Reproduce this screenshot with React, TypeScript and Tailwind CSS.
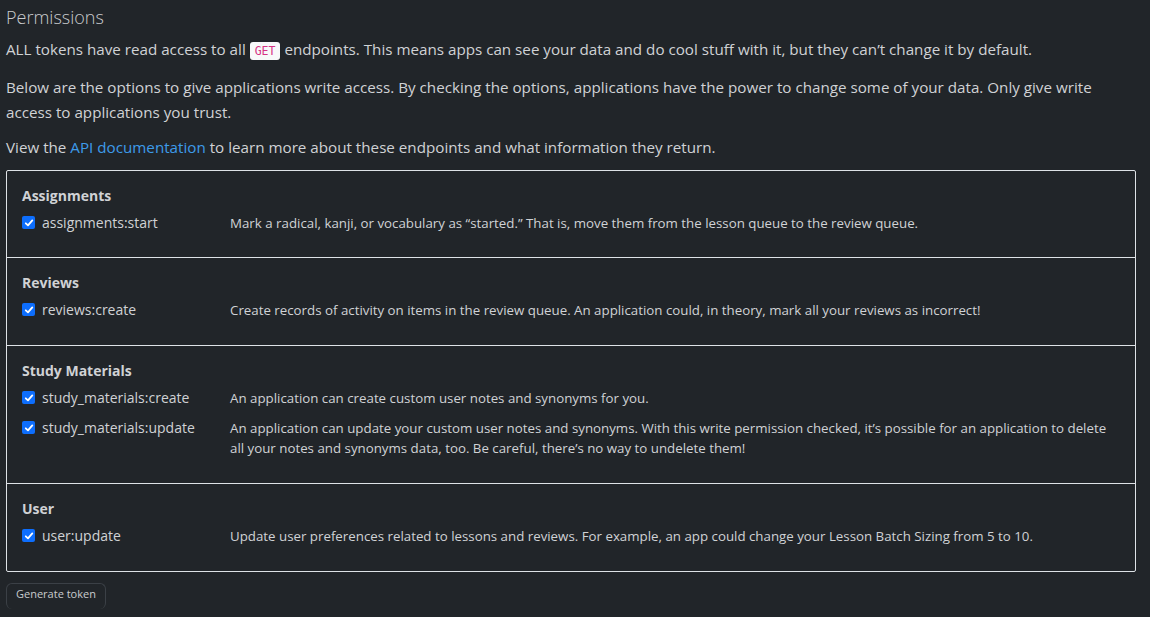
import React from "react";

const sections = [
  {
    title: "Assignments",
    items: [
      {
        name: "assignments:start",
        text: "Mark a radical, kanji, or vocabulary as \u201Cstarted.\u201D That is, move them from the lesson queue to the review queue.",
      },
    ],
  },
  {
    title: "Reviews",
    items: [
      {
        name: "reviews:create",
        text: "Create records of activity on items in the review queue. An application could, in theory, mark all your reviews as incorrect!",
      },
    ],
  },
  {
    title: "Study Materials",
    items: [
      {
        name: "study_materials:create",
        text: "An application can create custom user notes and synonyms for you.",
      },
      {
        name: "study_materials:update",
        text: "An application can update your custom user notes and synonyms. With this write permission checked, it\u2019s possible for an application to delete all your notes and synonyms data, too. Be careful, there\u2019s no way to undelete them!",
      },
    ],
  },
  {
    title: "User",
    items: [
      {
        name: "user:update",
        text: "Update user preferences related to lessons and reviews. For example, an app could change your Lesson Batch Sizing from 5 to 10.",
      },
    ],
  },
];

const Check = () => (
  <span className="mt-[3px] flex h-[13px] w-[13px] shrink-0 items-center justify-center rounded-[2px] bg-[#0d6efd]">
    <svg width="10" height="10" viewBox="0 0 10 10" fill="none">
      <path d="M1.8 5.3 L4 7.4 L8.3 2.4" stroke="white" strokeWidth="1.8" strokeLinecap="round" strokeLinejoin="round" />
    </svg>
  </span>
);

export default function App() {
  return (
    <div className="min-h-screen bg-[#212529] px-[6px] text-[#d0d2d5] [font-family:'Open_Sans',sans-serif]">
      <h1 className="pt-[4px] text-[18px] font-light leading-[27px] text-[#c9cbce]">Permissions</h1>
      <p className="mt-[6px] text-[15.2px] leading-[25px]">
        ALL tokens have read access to all{" "}
        <code className="rounded-[3px] bg-[#f8f9fa] px-[5px] py-[2px] text-[11.5px] text-[#d63384] [font-family:'DejaVu_Sans_Mono',monospace]">GET</code>{" "}
        endpoints. This means apps can see your data and do cool stuff with it, but they can{"\u2019"}t change it by default.
      </p>
      <p className="mt-[11px] w-[1110px] text-[15.2px] leading-[25px]">
        Below are the options to give applications write access. By checking the options, applications have the power to change some of your data. Only give write access to applications you trust.
      </p>
      <p className="mt-[10px] text-[15.2px] leading-[25px]">
        View the <a className="text-[#3d9be9]">API documentation</a> to learn more about these endpoints and what information they return.
      </p>
      <div className="mt-[10px] w-[1130px] rounded-[2px] border border-[#dee2e6]">
        {sections.map((s, i) => (
          <div
            key={s.title}
            className={`px-[15px] pt-[15px] ${i > 0 ? "border-t border-[#dee2e6] pb-[25px]" : "pb-[24px]"}`}
          >
            <div className="text-[14px] font-bold leading-[20px] text-[#d0d2d5]">{s.title}</div>
            <div className="mt-[7px] flex flex-col gap-[10px]">
              {s.items.map((it) => (
                <div key={it.name} className="flex leading-[20px]">
                  <div className="flex w-[208px] shrink-0 gap-[7px] text-[14px]">
                    <Check />
                    <span>{it.name}</span>
                  </div>
                  <div className="pr-[10px] text-[13.3px]">{it.text}</div>
                </div>
              ))}
            </div>
          </div>
        ))}
      </div>
      <button className="mt-[11px] h-[26px] rounded-[6px] border-x border-t border-[#3b4046] px-[9px] pb-[4px] text-[11px] text-[#c9cbce]">
        Generate token
      </button>
    </div>
  );
}
